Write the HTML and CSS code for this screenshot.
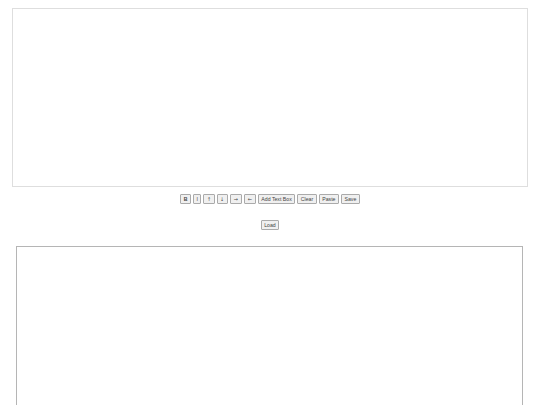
FILE: index.html
```html
<!DOCTYPE html>
<html>
<head>
<meta charset="utf-8">
<link rel="stylesheet" href="styles.css">
</head>
<body>
<div class="editor" contenteditable="true"></div>
<div class="toolbar">
  <button class="btn bold">B</button>
  <button class="btn">I</button>
  <button class="btn arrow">↑</button>
  <button class="btn arrow">↓</button>
  <button class="btn arrow wide">→</button>
  <button class="btn arrow wide">←</button>
  <button class="btn">Add Text Box</button>
  <button class="btn">Clear</button>
  <button class="btn">Paste</button>
  <button class="btn">Save</button>
</div>
<div class="toolbar load-row">
  <button class="btn">Load</button>
</div>
<div class="canvas"></div>
</body>
</html>
```
FILE: styles.css
```css
html, body {
  margin: 0;
  padding: 0;
  background: #fff;
  font-family: "Liberation Sans", Arial, sans-serif;
}
.editor {
  margin: 8px 12px 0 12px;
  height: 177px;
  border: 1px solid #dedede;
}
.toolbar {
  display: flex;
  justify-content: center;
  gap: 2px;
  margin-top: 7px;
}
.load-row {
  margin-top: 16px;
}
.btn {
  font-family: "Liberation Sans", Arial, sans-serif;
  font-size: 5.2px;
  line-height: 6px;
  height: 10px;
  padding: 0 2.5px;
  margin: 0;
  color: #444;
  background: #f0f0f0;
  border: 1px solid #aaa;
  border-radius: 1px;
}
.bold {
  font-weight: bold;
  min-width: 10px;
}
.arrow {
  font-family: "DejaVu Sans", sans-serif;
  font-size: 5px;
  min-width: 10px;
}
.wide {
  min-width: 12px;
}
.canvas {
  margin: 16px 17px 0 16px;
  height: 200px;
  border: 1px solid #b5b5b5;
}
```
